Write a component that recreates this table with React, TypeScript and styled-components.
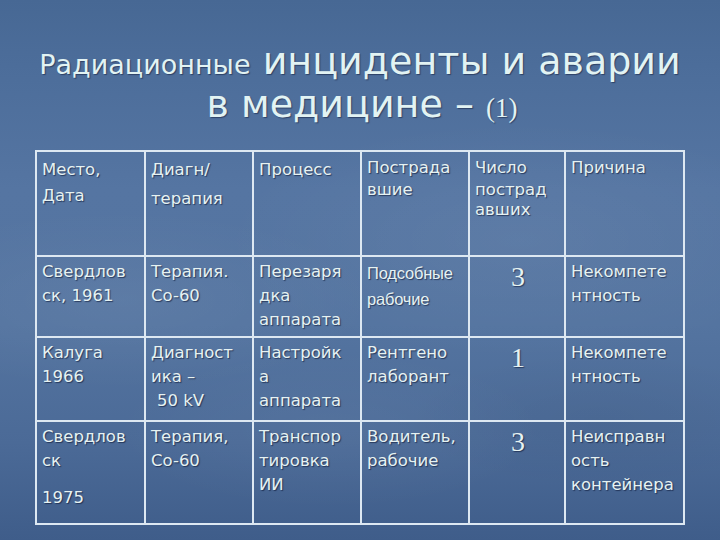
import styled, { createGlobalStyle } from "styled-components";

const GlobalStyle = createGlobalStyle`
  html, body {
    margin: 0;
    padding: 0;
  }
  body {
    background: #4a6a96;
  }
`;

const Slide = styled.div`
  width: 720px;
  height: 540px;
  overflow: hidden;
  font-family: "DejaVu Sans", Verdana, sans-serif;
  color: #e4f1f1;
  background:
    radial-gradient(ellipse 260px 90px at 120px 300px, rgba(255, 255, 255, 0.05), transparent),
    radial-gradient(ellipse 300px 120px at 520px 240px, rgba(255, 255, 255, 0.05), transparent),
    radial-gradient(ellipse 220px 80px at 330px 430px, rgba(255, 255, 255, 0.04), transparent),
    radial-gradient(ellipse 200px 70px at 600px 420px, rgba(0, 0, 0, 0.04), transparent),
    linear-gradient(
      180deg,
      #476894 0%,
      #4c6d9a 12%,
      #5575a2 35%,
      #5474a0 60%,
      #4b6a97 82%,
      #3f5d8a 100%
    );
`;

const Title = styled.h1`
  margin: 0;
  height: 150px;
  box-sizing: border-box;
  padding-top: 40px;
  font-weight: normal;
  font-size: 38px;
  line-height: 43px;
  text-align: center;
  color: #e2f3f3;
  text-shadow: 1px 1px 1px rgba(20, 30, 60, 0.55);
`;

const TitleLine = styled.div<{ $shift?: number }>`
  white-space: nowrap;
  padding-left: ${(p) => p.$shift ?? 0}px;
`;

const Small = styled.span`
  font-size: 27px;
  line-height: 1;
`;

const Serif = styled.span`
  font-family: "Liberation Serif", "Times New Roman", serif;
  font-size: 27px;
  line-height: 1;
`;

const Table = styled.table`
  margin-left: 35px;
  width: 650px;
  table-layout: fixed;
  border-collapse: collapse;
  border: 2px solid #dde8f2;
`;

const Row = styled.tr<{ $h: number }>`
  height: ${(p) => p.$h}px;
`;

const Cell = styled.td<{ $top?: number; $center?: boolean }>`
  border: 2px solid #dde8f2;
  vertical-align: top;
  padding: ${(p) => p.$top ?? 3}px 3px 0 5px;
  font-size: 16.5px;
  line-height: 24px;
  text-align: ${(p) => (p.$center ? "center" : "left")};
  color: #e6f2f2;
  text-shadow: 1px 1px 1px rgba(10, 20, 50, 0.6);
  white-space: nowrap;
  overflow: hidden;
`;

const Line = styled.div<{ $gap?: number; $indent?: number }>`
  margin-top: ${(p) => p.$gap ?? 0}px;
  padding-left: ${(p) => p.$indent ?? 0}px;
`;

const Narrow = styled.div`
  font-family: "Liberation Sans", Arial, sans-serif;
  font-size: 16.5px;
  line-height: 26px;
  letter-spacing: -0.2px;
`;

const Count = styled.div`
  font-family: "Liberation Serif", "Times New Roman", serif;
  font-size: 28px;
  line-height: 32px;
  padding-top: 1px;
`;

const cols = [109, 108, 108, 108, 96, 119];

const App = () => {
  return (
    <>
      <GlobalStyle />
      <Slide>
        <Title>
          <TitleLine>
            <Small>Радиационные</Small> инциденты и аварии
          </TitleLine>
          <TitleLine $shift={4}>
            в медицине – <Serif>(1)</Serif>
          </TitleLine>
        </Title>

        <Table>
          <colgroup>
            {cols.map((w, i) => (
              <col key={i} style={{ width: w }} />
            ))}
          </colgroup>
          <tbody>
            <Row $h={105}>
              <Cell $top={6}>
                <Line>Место,</Line>
                <Line $gap={2}>Дата</Line>
              </Cell>
              <Cell $top={6}>
                <Line>Диагн/</Line>
                <Line $gap={5}>терапия</Line>
              </Cell>
              <Cell $top={6}>
                <Line>Процесс</Line>
              </Cell>
              <Cell $top={4}>
                <Line>Пострада</Line>
                <Line $gap={-2}>вшие</Line>
              </Cell>
              <Cell $top={4}>
                <Line>Число</Line>
                <Line $gap={-2}>пострад</Line>
                <Line $gap={-4}>авших</Line>
              </Cell>
              <Cell $top={4}>
                <Line>Причина</Line>
              </Cell>
            </Row>

            <Row $h={81}>
              <Cell>
                <Line>Свердлов</Line>
                <Line>ск, 1961</Line>
              </Cell>
              <Cell>
                <Line>Терапия.</Line>
                <Line>Co-60</Line>
              </Cell>
              <Cell>
                <Line>Перезаря</Line>
                <Line>дка</Line>
                <Line>аппарата</Line>
              </Cell>
              <Cell>
                <Narrow>Подсобные</Narrow>
                <Narrow>рабочие</Narrow>
              </Cell>
              <Cell $center>
                <Count>3</Count>
              </Cell>
              <Cell>
                <Line>Некомпете</Line>
                <Line>нтность</Line>
              </Cell>
            </Row>

            <Row $h={84}>
              <Cell>
                <Line>Калуга</Line>
                <Line>1966</Line>
              </Cell>
              <Cell>
                <Line>Диагност</Line>
                <Line>ика –</Line>
                <Line $indent={6}>50 kV</Line>
              </Cell>
              <Cell>
                <Line>Настройк</Line>
                <Line>а</Line>
                <Line>аппарата</Line>
              </Cell>
              <Cell>
                <Line>Рентгено</Line>
                <Line>лаборант</Line>
              </Cell>
              <Cell $center>
                <Count>1</Count>
              </Cell>
              <Cell>
                <Line>Некомпете</Line>
                <Line>нтность</Line>
              </Cell>
            </Row>

            <Row $h={103}>
              <Cell>
                <Line>Свердлов</Line>
                <Line>ск</Line>
                <Line $gap={13}>1975</Line>
              </Cell>
              <Cell>
                <Line>Терапия,</Line>
                <Line>Co-60</Line>
              </Cell>
              <Cell>
                <Line>Транспор</Line>
                <Line>тировка</Line>
                <Line>ИИ</Line>
              </Cell>
              <Cell>
                <Line>Водитель,</Line>
                <Line>рабочие</Line>
              </Cell>
              <Cell $center>
                <Count>3</Count>
              </Cell>
              <Cell>
                <Line>Неисправн</Line>
                <Line>ость</Line>
                <Line>контейнера</Line>
              </Cell>
            </Row>
          </tbody>
        </Table>
      </Slide>
    </>
  );
};

export default App;
